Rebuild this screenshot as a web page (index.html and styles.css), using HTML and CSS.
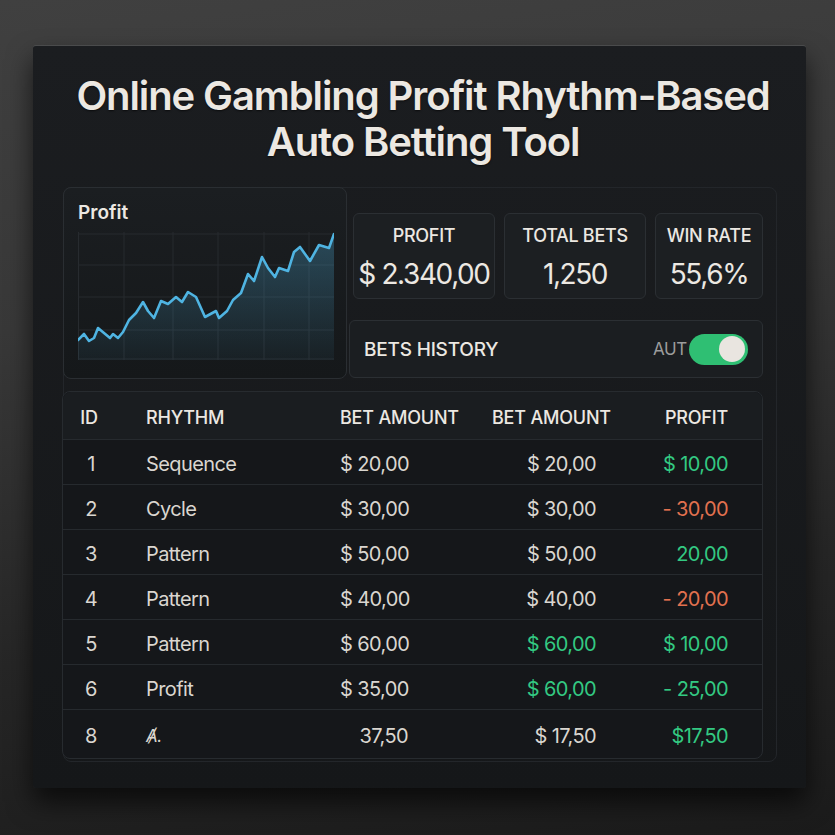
FILE: index.html
```html
<!DOCTYPE html>
<html lang="en">
<head>
  <meta charset="UTF-8">
  <meta name="viewport" content="width=device-width, initial-scale=1.0">
  <title>Auto Betting Tool</title>
  <link rel="stylesheet" href="styles.css">
</head>
<body>
  <main class="panel">
    <h1 class="title">Online Gambling Profit Rhythm-Based<br>Auto Betting Tool</h1>
    <div class="dash">
      <div class="toprow">
        <div class="chartcard">
          <div class="charttitle">Profit</div>
          <svg class="chart" width="256" height="128" viewBox="0 0 256 128">
            <defs>
              <linearGradient id="fill" x1="0" y1="0" x2="0" y2="1">
                <stop offset="0" stop-color="#4fb4e2" stop-opacity="0.3"/>
                <stop offset="1" stop-color="#4fb4e2" stop-opacity="0.05"/>
              </linearGradient>
            </defs>
            <g stroke="#272b2f" stroke-width="1">
              <line x1="0.5" y1="0" x2="0.5" y2="128"/>
              <line x1="46" y1="0" x2="46" y2="128"/>
              <line x1="95" y1="0" x2="95" y2="128"/>
              <line x1="140" y1="0" x2="140" y2="128"/>
              <line x1="186" y1="0" x2="186" y2="128"/>
              <line x1="231" y1="0" x2="231" y2="128"/>
              <line x1="0" y1="2" x2="256" y2="2"/>
              <line x1="0" y1="33" x2="256" y2="33"/>
              <line x1="0" y1="65" x2="256" y2="65"/>
              <line x1="0" y1="98" x2="256" y2="98"/>
              <line x1="0" y1="127" x2="256" y2="127"/>
            </g>
            <path fill="url(#fill)" d="M0,108 L6,102 L11,109 L16,106 L20,96 L26,101 L32,106 L35,102 L40,106 L45,100 L51,88 L58,81 L65,70 L70,79 L76,86 L83,69 L90,72 L98,65 L104,70 L110,60 L118,65 L127,85 L138,79 L141,86 L149,79 L155,68 L163,61 L170,42 L176,49 L184,25 L190,36 L197,45 L201,36 L210,39 L216,20 L222,15 L232,29 L241,13 L251,16 L256,2 L256,128 L0,128 Z"/>
            <polyline fill="none" stroke="#4fb4e2" stroke-width="2.6" stroke-linejoin="round" stroke-linecap="round" points="0,108 6,102 11,109 16,106 20,96 26,101 32,106 35,102 40,106 45,100 51,88 58,81 65,70 70,79 76,86 83,69 90,72 98,65 104,70 110,60 118,65 127,85 138,79 141,86 149,79 155,68 163,61 170,42 176,49 184,25 190,36 197,45 201,36 210,39 216,20 222,15 232,29 241,13 251,16 256,2"/>
          </svg>
        </div>
        <div class="rightcol">
          <div class="stats">
            <div class="stat">
              <div class="statlabel">PROFIT</div>
              <div class="statvalue">$ 2.340,00</div>
            </div>
            <div class="stat">
              <div class="statlabel">TOTAL BETS</div>
              <div class="statvalue">1,250</div>
            </div>
            <div class="stat">
              <div class="statlabel">WIN RATE</div>
              <div class="statvalue">55,6%</div>
            </div>
          </div>
          <div class="history">
            <span class="historytitle">BETS HISTORY</span>
            <div class="auto">
              <span class="autolabel">AUT</span>
              <span class="toggle"><span class="knob"></span></span>
            </div>
          </div>
        </div>
      </div>

      <div class="betstable">
        <div class="row head">
          <div class="c1">ID</div>
          <div class="c2">RHYTHM</div>
          <div class="c3">BET AMOUNT</div>
          <div class="c4">BET AMOUNT</div>
          <div class="c5">PROFIT</div>
        </div>
        <div class="row">
          <div class="c1">1</div>
          <div class="c2">Sequence</div>
          <div class="c3">$ 20,00</div>
          <div class="c4">$ 20,00</div>
          <div class="c5 win">$ 10,00</div>
        </div>
        <div class="row">
          <div class="c1">2</div>
          <div class="c2">Cycle</div>
          <div class="c3">$ 30,00</div>
          <div class="c4">$ 30,00</div>
          <div class="c5 loss">- 30,00</div>
        </div>
        <div class="row">
          <div class="c1">3</div>
          <div class="c2">Pattern</div>
          <div class="c3">$ 50,00</div>
          <div class="c4">$ 50,00</div>
          <div class="c5 win">20,00</div>
        </div>
        <div class="row">
          <div class="c1">4</div>
          <div class="c2">Pattern</div>
          <div class="c3">$ 40,00</div>
          <div class="c4">$ 40,00</div>
          <div class="c5 loss">- 20,00</div>
        </div>
        <div class="row">
          <div class="c1">5</div>
          <div class="c2">Pattern</div>
          <div class="c3">$ 60,00</div>
          <div class="c4 win">$ 60,00</div>
          <div class="c5 win">$ 10,00</div>
        </div>
        <div class="row">
          <div class="c1">6</div>
          <div class="c2">Profit</div>
          <div class="c3">$ 35,00</div>
          <div class="c4 win">$ 60,00</div>
          <div class="c5 win">- 25,00</div>
        </div>
        <div class="row last">
          <div class="c1">8</div>
          <div class="c2 odd">Ⱥ.</div>
          <div class="c3">37,50</div>
          <div class="c4">$ 17,50</div>
          <div class="c5 win">$17,50</div>
        </div>
      </div>
    </div>
  </main>
</body>
</html>
```

FILE: styles.css
```css
body{
  margin: 0;
  width: 835px;
  height: 835px;
  overflow: hidden;
  font-family: Inter, "Noto Sans", sans-serif;
  background: linear-gradient(172deg, #404040 0%, #383838 35%, #262626 70%, #1b1b1b 100%);
  color: #e4e0da;
}
.panel{
  box-sizing: border-box;
  width: 773px;
  height: 743px;
  margin: 45px 0 0 33px;
  padding: 0 29px 0 30px;
  background: linear-gradient(#1b1d20, #151719);
  border-top: 1px solid #4a4b4c;
  border-radius: 3px;
  box-shadow: 0 14px 26px rgba(0, 0, 0, .65);
  display: flex;
  flex-direction: column;
}
.title{
  margin: 27px 0 0 6px;
  font-size: 40px;
  line-height: 46px;
  font-weight: 600;
  letter-spacing: -1.1px;
  text-align: center;
  color: #ece8e2;
  text-shadow: 0 1px 2px rgba(0, 0, 0, .6);
}
.dash{
  margin-top: 22px;
  height: 575px;
  box-sizing: border-box;
  border: 1px solid #23262a;
  border-radius: 8px;
  padding: 0 13px 0 0;
  display: flex;
  flex-direction: column;
}
.toprow{
  display: flex;
  gap: 2px;
  height: 190px;
}
.chartcard{
  box-sizing: border-box;
  width: 284px;
  margin: -1px 0 0 -1px;
  height: 192px;
  padding: 13px 12px 0 14px;
  border: 1px solid #2a2e32;
  border-radius: 8px;
  background: linear-gradient(#1b1e21, #15181a);
}
.charttitle{
  font-size: 19px;
  line-height: 24px;
  font-weight: 600;
  color: #ece8e2;
}
.chart{
  display: block;
  margin-top: 7px;
}
.rightcol{
  flex: 1;
  padding-top: 25px;
  display: flex;
  flex-direction: column;
  gap: 21px;
}
.stats{
  display: grid;
  grid-template-columns: 142px 142px 1fr;
  gap: 9px;
  padding-left: 4px;
}
.stat{
  height: 86px;
  box-sizing: border-box;
  border: 1px solid #2b2f33;
  border-radius: 6px;
  background: #1c1f22;
  display: flex;
  flex-direction: column;
  align-items: center;
  padding-top: 10px;
}
.statlabel{
  font-size: 18px;
  line-height: 24px;
  font-weight: 500;
  letter-spacing: -0.3px;
  color: #ece8e2;
}
.statvalue{
  margin-top: 9px;
  font-size: 28px;
  line-height: 34px;
  letter-spacing: -1.4px;
  color: #ece8e2;
  white-space: nowrap;
}
.history{
  height: 58px;
  box-sizing: border-box;
  border: 1px solid #2b2f33;
  border-radius: 6px;
  background: #1b1e21;
  display: flex;
  align-items: center;
  justify-content: space-between;
  padding: 0 14px 0 14px;
}
.historytitle{
  font-size: 19px;
  font-weight: 500;
  letter-spacing: -0.2px;
  color: #ece8e2;
}
.auto{
  display: flex;
  align-items: center;
  gap: 2px;
}
.autolabel{
  font-size: 17px;
  color: #9c9c9c;
  letter-spacing: -0.3px;
}
.toggle{
  width: 59px;
  height: 31px;
  border-radius: 16px;
  background: #2fbf73;
  display: flex;
  align-items: center;
  justify-content: flex-end;
  padding-right: 3px;
  box-sizing: border-box;
}
.knob{
  width: 26px;
  height: 26px;
  border-radius: 50%;
  background: #e9e5e0;
}
.betstable{
  margin: 13px 0 0 -2px;
  border: 1px solid #272b2f;
  border-radius: 8px;
  background: #15171a;
}
.row{
  display: grid;
  grid-template-columns: 52px 225px 138px 142px 1fr;
  align-items: center;
  height: 45px;
  box-sizing: border-box;
  padding-top: 3px;
  border-top: 1px solid #262a2e;
  font-size: 20px;
  letter-spacing: -0.6px;
  color: #dad6d0;
  white-space: nowrap;
}
.row.head{
  height: 47px;
  border-top: none;
  font-size: 18px;
  font-weight: 500;
  letter-spacing: -0.2px;
  color: #ece8e2;
  background: #1a1d20;
  border-radius: 8px 8px 0 0;
}
.row.last{
  height: 49px;
}
.c1{
  text-align: center;
  padding-left: 4px;
}
.head .c1{
  padding-left: 0;
}
.c2{
  padding-left: 31px;
}
.c3{
  text-align: right;
  padding-right: 70px;
}
.c4{
  text-align: right;
  padding-right: 24px;
}
.c5{
  text-align: right;
  padding-right: 34px;
}
.head .c3{
  text-align: left;
  padding-right: 0;
}
.head .c4{
  text-align: left;
  padding: 0 0 0 14px;
}
.odd{
  font-style: italic;
  font-size: 17px;
}
.win{
  color: #33c982;
}
.loss{
  color: #e2714f;
}
```
